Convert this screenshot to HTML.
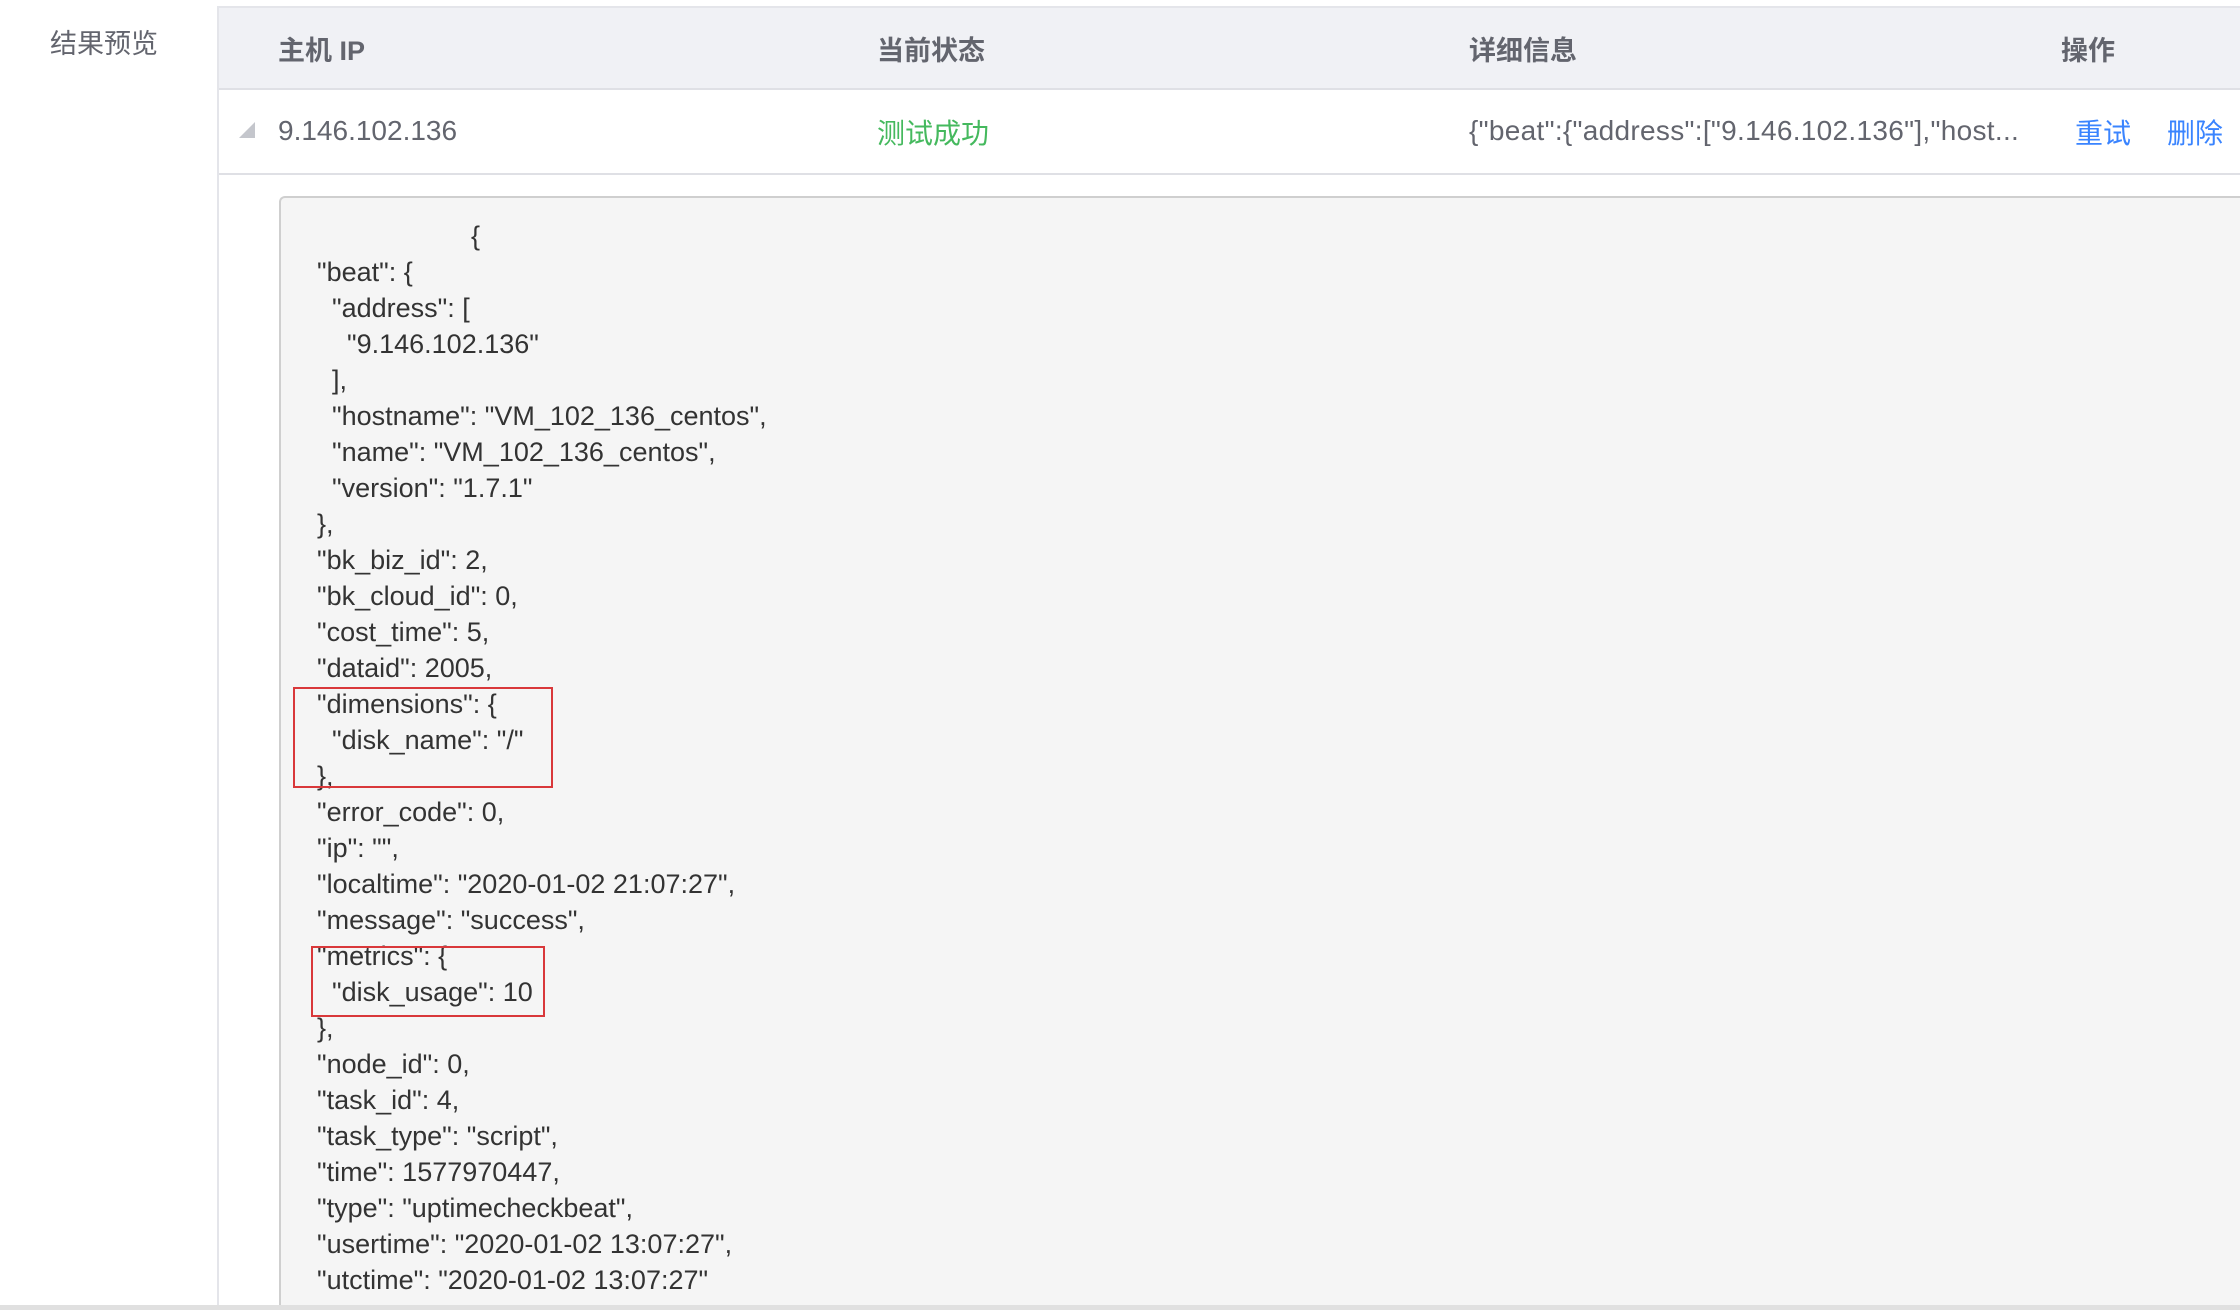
<!DOCTYPE html>
<html style="width:2240px;height:1310px;overflow:hidden"><head><meta charset="utf-8"><style>
*{margin:0;padding:0;box-sizing:border-box}
body{width:2240px;height:1310px;overflow:hidden;background:#fff;font-family:"Liberation Sans","Noto Sans CJK SC",sans-serif;position:relative}
.a{position:absolute;white-space:nowrap}
.lbl{left:50px;top:22px;font-size:27px;color:#63656e}
.tbl{left:217px;top:6px;width:2023px;height:1299px;border-left:2px solid #e4e5ea;border-top:2px solid #e4e5ea}
.hdr{left:219px;top:8px;width:2021px;height:82px;background:#f0f1f5;border-bottom:2px solid #dfe0e5}
.h{top:29px;font-size:27px;font-weight:bold;color:#63656e}
.row{left:219px;top:92px;width:2021px;height:83px;border-bottom:2px solid #dfe0e5}
.c{top:116px;font-size:28px;color:#63656e}
.code{left:279px;top:196px;width:1961px;height:1109px;background:#f5f5f5;border:2px solid #cfcfcf;border-bottom:none;border-right:none;border-radius:6px 0 0 0}
.box{border:2px solid #d9383a}
.bot{left:0;top:1305px;width:2240px;height:5px;background:#e0e0e0}
</style></head><body>
<div class="a lbl">结果预览</div>
<div class="a tbl"></div>
<div class="a hdr"></div>
<div class="a h" style="left:278px">主机 IP</div>
<div class="a h" style="left:877px">当前状态</div>
<div class="a h" style="left:1469px">详细信息</div>
<div class="a h" style="left:2061px">操作</div>
<div class="a row"></div>
<svg class="a" style="left:237px;top:120px" width="20" height="20"><polygon points="18,2 18,18 2,18" fill="#c4c6cc"/></svg>
<div class="a c" style="left:278px;top:115px">9.146.102.136</div>
<div class="a c" style="left:877px;top:112px;color:#45b95e">测试成功</div>
<div class="a c" style="left:1469px;top:115px;letter-spacing:0.3px">{"beat":{"address":["9.146.102.136"],"host...</div>
<div class="a c" style="left:2075px;top:112px;color:#3a84ff">重试</div>
<div class="a c" style="left:2167px;top:112px;color:#3a84ff">删除</div>
<div class="a code"></div>
<div class="a" style="left:471px;top:218px;font-size:27px;color:#333;line-height:36px">{</div>
<div class="a" style="left:317px;top:254px;font-size:27px;color:#333;line-height:36px;white-space:pre">"beat": {
  "address": [
    "9.146.102.136"
  ],
  "hostname": "VM_102_136_centos",
  "name": "VM_102_136_centos",
  "version": "1.7.1"
},
"bk_biz_id": 2,
"bk_cloud_id": 0,
"cost_time": 5,
"dataid": 2005,
"dimensions": {
  "disk_name": "/"
},
"error_code": 0,
"ip": "",
"localtime": "2020-01-02 21:07:27",
"message": "success",
"metrics": {
  "disk_usage": 10
},
"node_id": 0,
"task_id": 4,
"task_type": "script",
"time": 1577970447,
"type": "uptimecheckbeat",
"usertime": "2020-01-02 13:07:27",
"utctime": "2020-01-02 13:07:27"
}</div>
<div class="a box" style="left:293px;top:687px;width:260px;height:101px"></div>
<div class="a box" style="left:311px;top:946px;width:234px;height:71px"></div>
<div class="a bot"></div>
</body></html>
